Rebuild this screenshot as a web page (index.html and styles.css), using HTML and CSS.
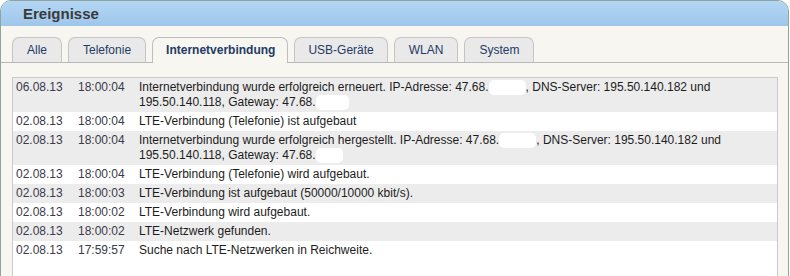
FILE: index.html
```html
<!DOCTYPE html>
<html lang="de">
<head>
    <meta charset="UTF-8">
    <title>Ereignisse</title>
    <link rel="stylesheet" href="styles.css">
</head>
<body>
    <div class="panel">
        <div class="panel-head">Ereignisse</div>
        <div class="panel-body">
            <!-- Reiter -->
            <ul class="tabs">
                <li>Alle</li>
                <li>Telefonie</li>
                <li class="active">Internetverbindung</li>
                <li class="usb">USB-Geräte</li>
                <li>WLAN</li>
                <li>System</li>
            </ul>

            <!-- Ereignisliste -->
            <div class="log">
                <table>
                    <colgroup>
                        <col class="col-date">
                        <col class="col-time">
                        <col>
                    </colgroup>
                    <tr>
                        <td class="stamp">06.08.13</td>
                        <td class="stamp">18:00:04</td>
                        <td>Internetverbindung wurde erfolgreich erneuert. IP-Adresse: 47.68.<span class="hidden w37"></span>, DNS-Server: 195.50.140.182 und 195.50.140.118, Gateway: 47.68.<span class="hidden w33"></span></td>
                    </tr>
                    <tr>
                        <td class="stamp">02.08.13</td>
                        <td class="stamp">18:00:04</td>
                        <td>LTE-Verbindung (Telefonie) ist aufgebaut</td>
                    </tr>
                    <tr>
                        <td class="stamp">02.08.13</td>
                        <td class="stamp">18:00:04</td>
                        <td>Internetverbindung wurde erfolgreich hergestellt. IP-Adresse: 47.68.<span class="hidden w37"></span>, DNS-Server: 195.50.140.182 und 195.50.140.118, Gateway: 47.68.<span class="hidden w27"></span></td>
                    </tr>
                    <tr>
                        <td class="stamp">02.08.13</td>
                        <td class="stamp">18:00:04</td>
                        <td>LTE-Verbindung (Telefonie) wird aufgebaut.</td>
                    </tr>
                    <tr>
                        <td class="stamp">02.08.13</td>
                        <td class="stamp">18:00:03</td>
                        <td>LTE-Verbindung ist aufgebaut (50000/10000 kbit/s).</td>
                    </tr>
                    <tr>
                        <td class="stamp">02.08.13</td>
                        <td class="stamp">18:00:02</td>
                        <td>LTE-Verbindung wird aufgebaut.</td>
                    </tr>
                    <tr>
                        <td class="stamp">02.08.13</td>
                        <td class="stamp">18:00:02</td>
                        <td>LTE-Netzwerk gefunden.</td>
                    </tr>
                    <tr>
                        <td class="stamp">02.08.13</td>
                        <td class="stamp">17:59:57</td>
                        <td>Suche nach LTE-Netzwerken in Reichweite.</td>
                    </tr>
                </table>
            </div>
        </div>
    </div>
</body>
</html>
```

FILE: styles.css
```css
body {
    margin: 0;
    padding: 0;
    background-color: #fff;
    font-family: 'Liberation Sans', Arial, sans-serif;
    overflow: hidden;
}
.panel {
    width: 787px;
    min-height: 320px;
    border: 1px solid #8fa59c;
    border-radius: 11px 11px 0 0;
    background-color: #f7f6f1;
}
.panel-head {
    height: 25px;
    line-height: 25px;
    padding-left: 22px;
    border-radius: 10px 10px 0 0;
    background: linear-gradient(#b3d6f4, #9fc6ea);
    color: #3a3a3a;
    font-size: 15px;
    font-weight: bold;
}
.tabs {
    display: flex;
    gap: 6px;
    list-style: none;
    margin: 0;
    padding: 11px 11px 0;
    border-bottom: 1px solid #b8b8b8;
}
.tabs li {
    height: 24px;
    line-height: 24px;
    padding: 0 14px;
    border: 1px solid #c4c4c4;
    border-bottom: none;
    border-radius: 7px 7px 0 0;
    background-color: #e9e9e9;
    color: #233a66;
    font-size: 12px;
}
.tabs li.active {
    background-color: #f7f6f1;
    border-color: #bdbdbd;
    font-weight: bold;
    padding: 0 12px 0 13px;
    margin-bottom: -1px;
    height: 25px;
}
.tabs li.usb {
    padding: 0 13px;
}
.log {
    margin: 14px 10px 0 11px;
    min-height: 260px;
    border: 1px solid #cacaca;
    background-color: #fff;
}
.log table {
    width: 100%;
    border-collapse: collapse;
    table-layout: fixed;
    font-size: 12px;
    line-height: 15px;
    color: #1c1c1c;
}
.col-date {
    width: 62px;
}
.col-time {
    width: 61px;
}
.log td {
    padding: 2px 3px;
    vertical-align: top;
}
.log tr:nth-child(odd) {
    background-color: #ececec;
}
.log td.stamp {
    color: #3a3a48;
    white-space: nowrap;
}
.hidden {
    display: inline-block;
    height: 15px;
    vertical-align: top;
    background-color: #fff;
    border-radius: 5px;
}
.w37 {
    width: 37px;
}
.w33 {
    width: 33px;
}
.w27 {
    width: 27px;
}
```
